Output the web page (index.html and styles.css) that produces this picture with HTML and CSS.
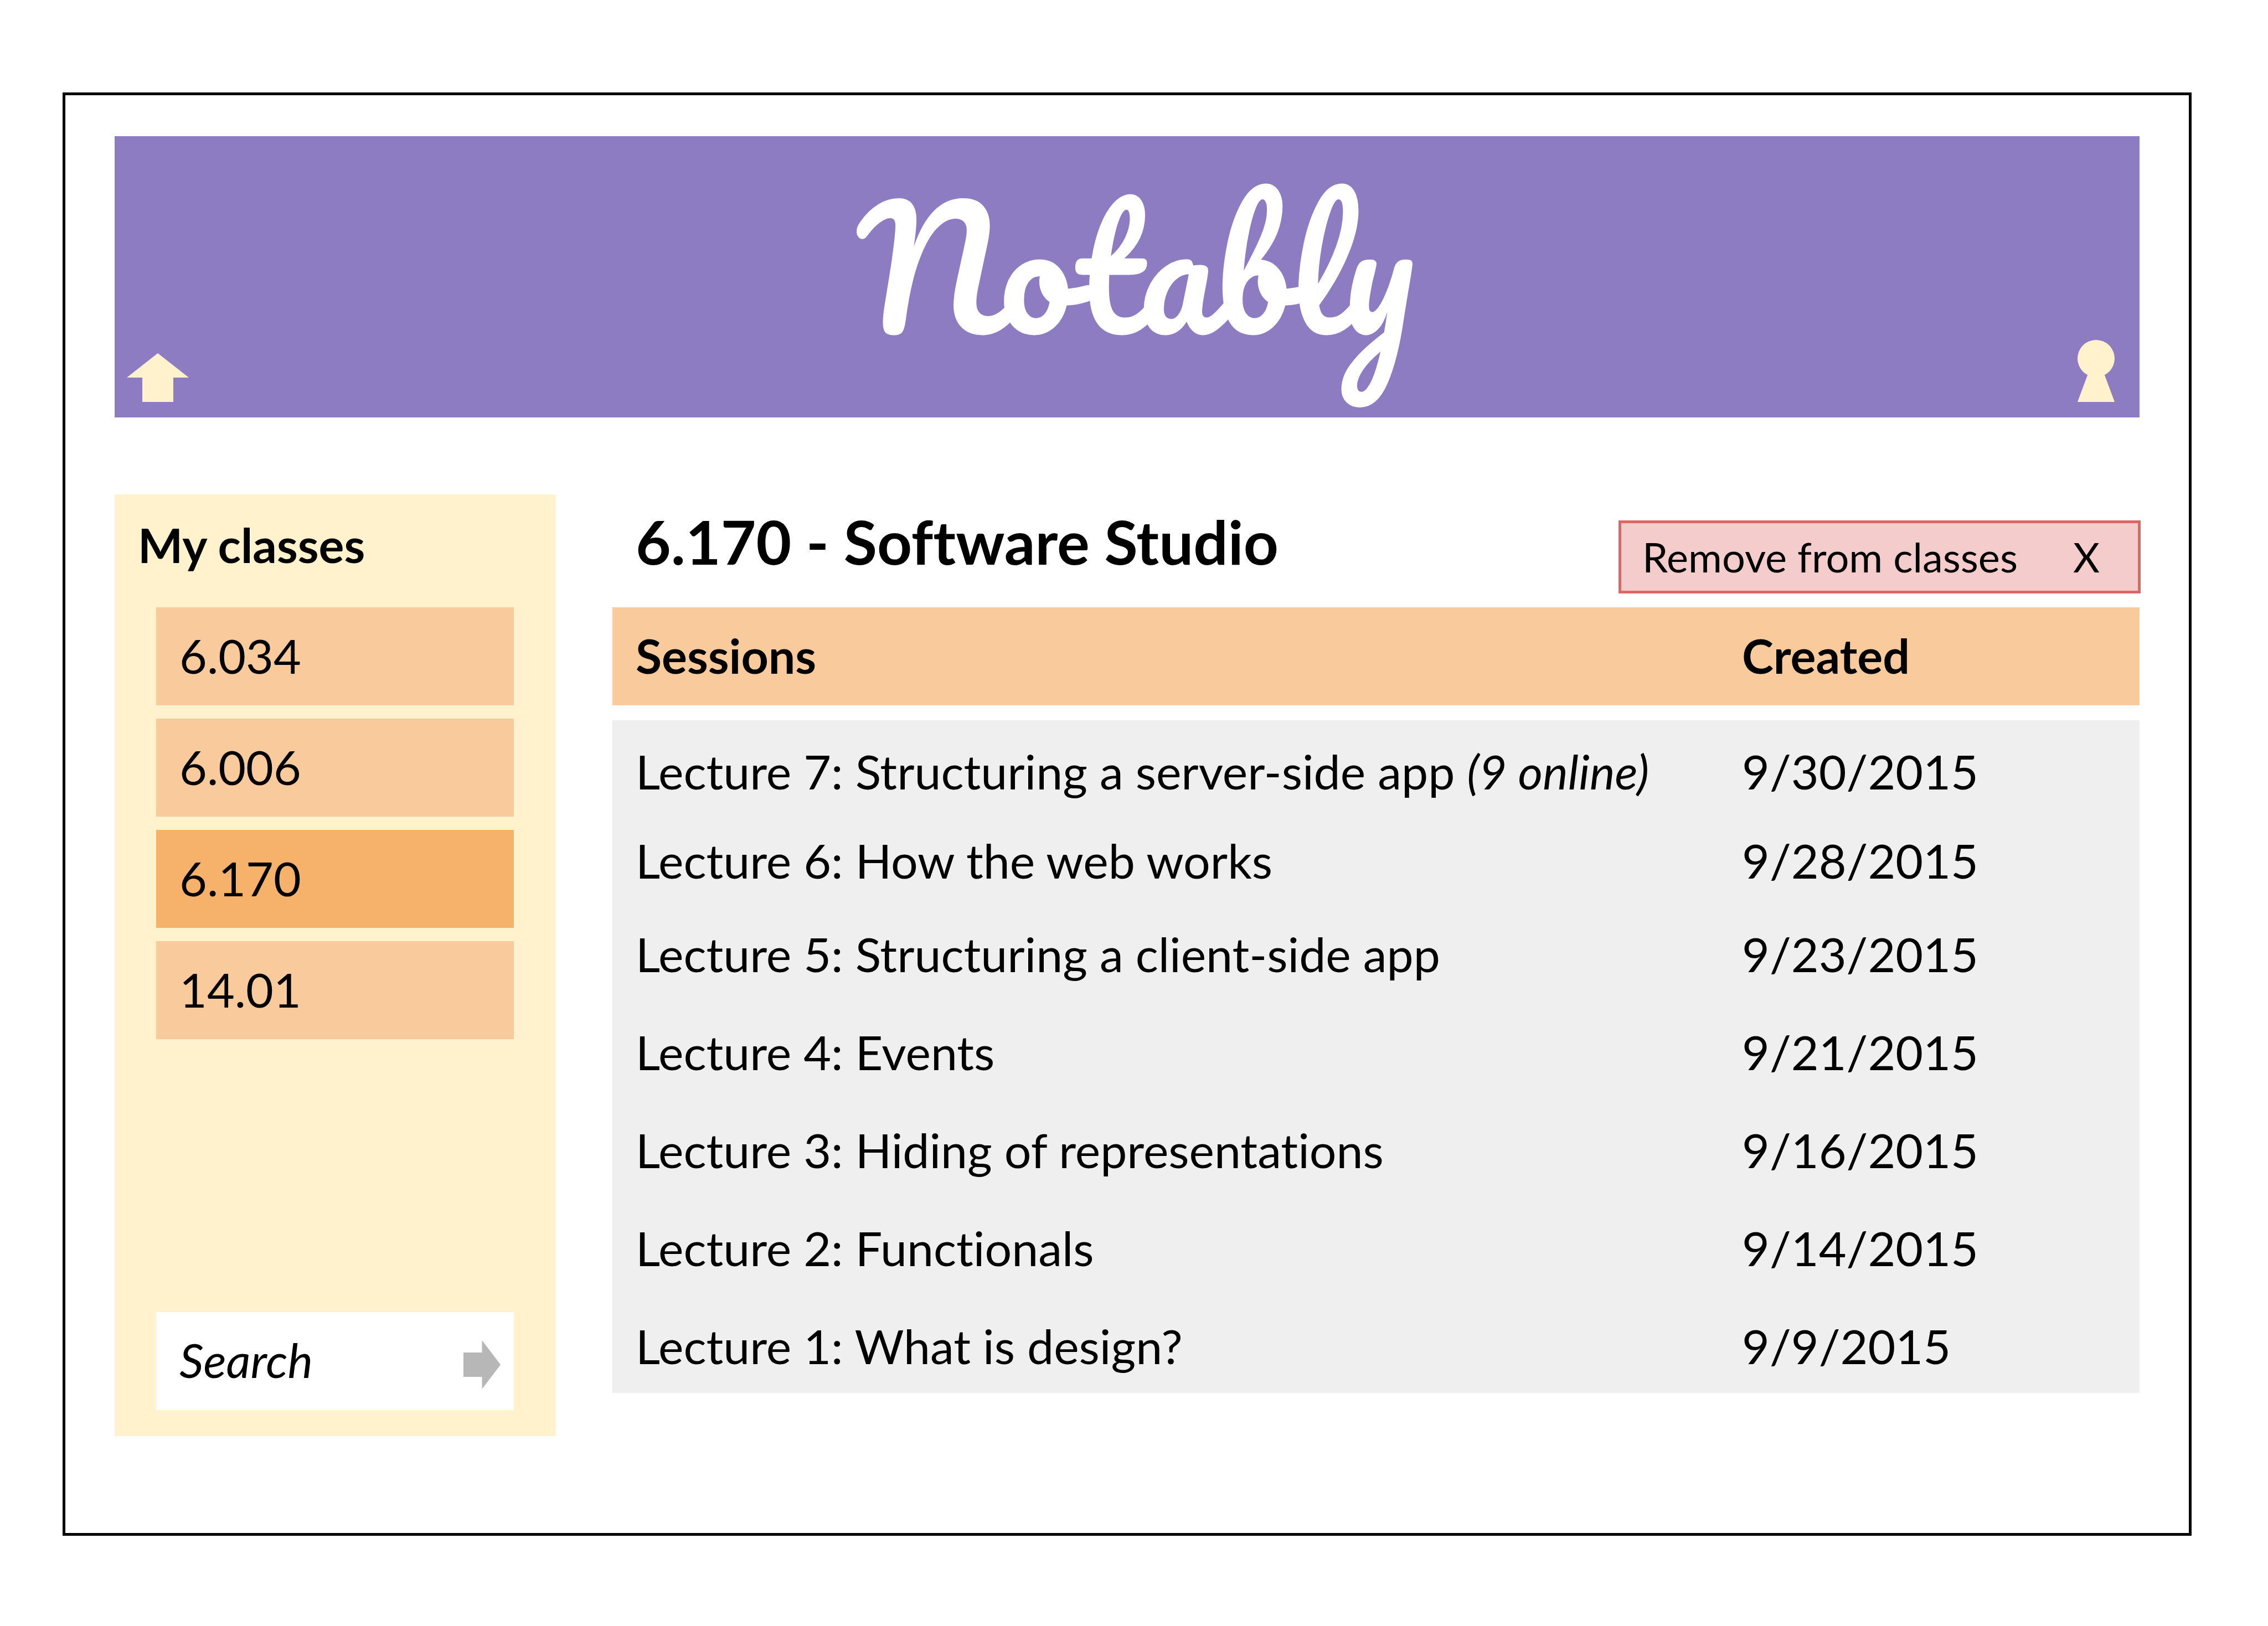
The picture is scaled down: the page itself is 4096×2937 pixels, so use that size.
FILE: index.html
```html
<!DOCTYPE html>
<html lang="en">
<head>
<meta charset="utf-8">
<title>Notably - 6.170</title>
<link rel="stylesheet" href="styles.css">
</head>
<body>
<div class="frame">
  <header class="banner">
    <a class="banner-link" href="#home" aria-label="Home">
      <svg class="icon-home" viewBox="0 0 112 88"><path d="M56 0 112 44H84V88H28V44H0Z"/></svg>
    </a>
    <div class="logo">Notably</div>
    <a class="banner-link" href="#account" aria-label="Account">
      <svg class="icon-key" viewBox="0 0 67 112"><circle cx="33.5" cy="33.5" r="33.5"/><path d="M19 61H48L67 112H0Z"/></svg>
    </a>
  </header>
  <div class="columns">
    <nav class="sidebar">
      <h2 class="sidebar-title">My classes</h2>
      <ul class="class-list">
        <li><a class="class-item" href="#6.034">6.034</a></li>
        <li><a class="class-item" href="#6.006">6.006</a></li>
        <li><a class="class-item class-item-current" href="#6.170">6.170</a></li>
        <li><a class="class-item" href="#14.01">14.01</a></li>
      </ul>
      <form class="search">
        <input class="search-input" type="text" placeholder="Search" aria-label="Search">
        <button class="search-button" type="submit" aria-label="Go">
          <svg class="icon-go" viewBox="0 0 67 88"><path d="M67 44 33.5 88V66H0V22H33.5V0Z"/></svg>
        </button>
      </form>
    </nav>
    <main class="content">
      <div class="title-row">
        <h1 class="title">6.170 - Software Studio</h1>
        <button class="remove" type="button"><span>Remove from classes</span><span>X</span></button>
      </div>
      <table class="sessions">
        <thead>
          <tr><th>Sessions</th><th class="created">Created</th></tr>
        </thead>
        <tbody>
          <tr><td>Lecture 7: Structuring a server-side app <em>(9 online)</em></td><td>9/30/2015</td></tr>
          <tr><td>Lecture 6: How the web works</td><td>9/28/2015</td></tr>
          <tr><td>Lecture 5: Structuring a client-side app</td><td>9/23/2015</td></tr>
          <tr><td>Lecture 4: Events</td><td>9/21/2015</td></tr>
          <tr><td>Lecture 3: Hiding of representations</td><td>9/16/2015</td></tr>
          <tr><td>Lecture 2: Functionals</td><td>9/14/2015</td></tr>
          <tr><td>Lecture 1: What is design?</td><td>9/9/2015</td></tr>
        </tbody>
      </table>
    </main>
  </div>
</div>
</body>
</html>
```
FILE: styles.css
```css
* { box-sizing: border-box; }

body {
  margin: 0;
  padding: 167px 138px 163px 113px;
  background: #fff;
  color: #000;
  font: 86px/106px Lato, sans-serif;
  font-variant-ligatures: none;
}

.frame {
  border: 5px solid #000;
  padding: 74px 89px 175px;
}

.banner {
  display: flex;
  align-items: flex-end;
  justify-content: space-between;
  height: 508px;
  padding: 0 45px 28px 22px;
  background: #8e7cc3;
}

.banner-link { display: flex; fill: #fff2cc; }
.icon-home { width: 112px; height: 88px; }
.icon-key { width: 67px; height: 112px; }

.logo {
  align-self: center;
  padding: 0 0 10px 8px;
  color: #fff;
  font: 290px/360px Pacifico, cursive;
}

.columns { display: flex; gap: 103px; margin-top: 139px; }

.sidebar {
  display: flex;
  flex-direction: column;
  width: 796px;
  height: 1701px;
  padding: 38px 75px 47px;
  background: #fff2cc;
}

.sidebar-title { margin: 0 -33px 60px; font-size: 86px; line-height: 106px; }

.class-list {
  display: flex;
  flex-direction: column;
  gap: 24px;
  margin: 0;
  padding: 0;
  list-style: none;
}

.class-item {
  display: block;
  padding: 34px 42px 37px;
  background: #f9cb9c;
  color: inherit;
  text-decoration: none;
}
.class-item-current { background: #f6b26b; }

.search {
  display: flex;
  align-items: flex-end;
  height: 177px;
  margin-top: auto;
  padding: 0 24px 38px 42px;
  background: #fff;
}
.search-input {
  flex: 1;
  min-width: 0;
  height: 106px;
  padding: 0;
  border: 0;
  outline: 0;
  background: none;
  color: #000;
  font: italic 86px/106px Lato, sans-serif;
}
.search-input::placeholder { color: #000; opacity: 1; }
.search-button { display: flex; padding: 0; border: 0; background: none; }
.icon-go { width: 67px; height: 88px; fill: #b7b7b7; }

.content { flex: 1; }

.title-row {
  display: flex;
  align-items: flex-start;
  justify-content: space-between;
  height: 204px;
  padding: 16px 0 25px 42px;
}
.title { margin: 0; font-size: 110px; line-height: 136px; }

.remove {
  display: flex;
  align-self: flex-end;
  align-items: center;
  gap: 100px;
  height: 132px;
  margin-right: -2px;
  padding: 0 69px 0 38px;
  border: 5px solid #e06666;
  background: #f4cccc;
  color: #000;
  font: 74px/90px Lato, sans-serif;
}

.sessions { width: 100%; border-spacing: 0; }
.sessions th, .sessions td { padding: 0 0 0 42px; text-align: left; }
.sessions th {
  height: 204px;
  padding-bottom: 4px;
  border-bottom: 27px solid #fff;
  background: #f9cb9c;
}
.sessions .created { width: 760px; }
.sessions tbody { background: #efefef; }
.sessions td {
  height: 177px;
  padding-bottom: 32px;
  vertical-align: bottom;
}
.sessions tr:nth-child(2) td { height: 161px; }
.sessions tr:nth-child(3) td { height: 169px; }
```
